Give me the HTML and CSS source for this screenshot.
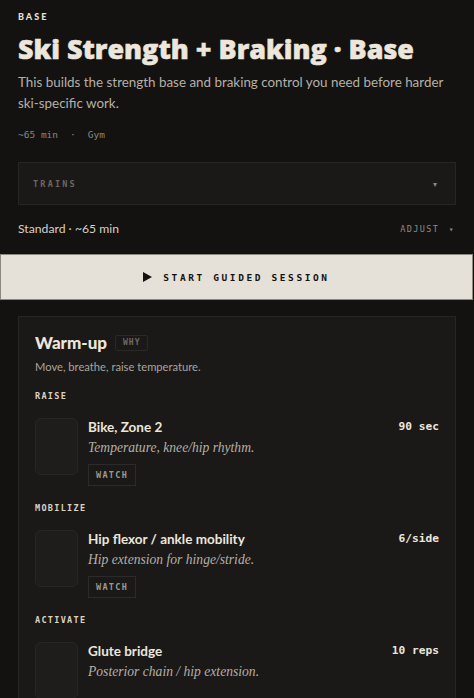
FILE: index.html
```html
<!DOCTYPE html>
<html lang="en">
<head>
<meta charset="utf-8">
<title>Ski Strength + Braking · Base</title>
<link rel="stylesheet" href="styles.css">
</head>
<body>
<main class="page">
  <div class="eyebrow">BASE</div>
  <h1 class="title">Ski Strength + Braking · Base</h1>
  <p class="lede">This builds the strength base and braking control you need before harder ski-specific work.</p>
  <div class="meta"><span>~65 min</span><span>·</span><span>Gym</span></div>

  <div class="select">
    <span class="select-label">TRAINS</span>
    <span class="caret">▾</span>
  </div>

  <div class="option-row">
    <span class="option-text">Standard · ~65 min</span>
    <span class="adjust">ADJUST <span class="caret small">▾</span></span>
  </div>

  <button class="start" type="button"><svg class="play" width="9" height="10" viewBox="0 0 9 10" aria-hidden="true"><path d="M0 0 L9 5 L0 10 Z" fill="#141312"/></svg><span>START GUIDED SESSION</span></button>

  <section class="card">
    <div class="card-head">
      <h2 class="card-title">Warm-up</h2>
      <span class="why">WHY</span>
    </div>
    <p class="card-sub">Move, breathe, raise temperature.</p>

    <div class="group-label">RAISE</div>
    <div class="exercise">
      <div class="thumb"></div>
      <div class="ex-body">
        <div class="ex-top"><span class="ex-name">Bike, Zone 2</span><span class="ex-dose">90 sec</span></div>
        <div class="ex-desc">Temperature, knee/hip rhythm.</div>
        <span class="watch">WATCH</span>
      </div>
    </div>

    <div class="group-label">MOBILIZE</div>
    <div class="exercise">
      <div class="thumb"></div>
      <div class="ex-body">
        <div class="ex-top"><span class="ex-name">Hip flexor / ankle mobility</span><span class="ex-dose">6/side</span></div>
        <div class="ex-desc">Hip extension for hinge/stride.</div>
        <span class="watch">WATCH</span>
      </div>
    </div>

    <div class="group-label">ACTIVATE</div>
    <div class="exercise">
      <div class="thumb"></div>
      <div class="ex-body">
        <div class="ex-top"><span class="ex-name">Glute bridge</span><span class="ex-dose">10 reps</span></div>
        <div class="ex-desc">Posterior chain / hip extension.</div>
      </div>
    </div>
  </section>
</main>
</body>
</html>
```
FILE: styles.css
```css
html, body {
  margin: 0;
  padding: 0;
  background: #131211;
}
body {
  font-family: Lato, "Open Sans", sans-serif;
  color: #ece6dc;
}
.page {
  padding: 11px 18px 40px;
}
.eyebrow {
  font-family: Lato, sans-serif;
  font-weight: 900;
  font-size: 9px;
  line-height: 12px;
  letter-spacing: 2px;
  color: #e6e0d6;
}
.title {
  margin: 9px 0 0;
  font-family: "Open Sans", sans-serif;
  font-weight: 800;
  font-size: 26.9px;
  line-height: 34px;
  -webkit-text-stroke: 0.5px #ece6dc;
  color: #ece6dc;
}
.lede {
  margin: 6px 0 0;
  font-size: 13.4px;
  line-height: 21px;
  color: #b5b0a6;
}
.meta {
  margin-top: 14px;
  display: flex;
  gap: 12px;
  font-family: "DejaVu Sans Mono", monospace;
  font-size: 9.5px;
  line-height: 14px;
  color: #8a867f;
}
.select {
  margin-top: 20px;
  height: 43px;
  box-sizing: border-box;
  border: 1px solid #262523;
  background: #1a1918;
  display: flex;
  align-items: center;
  justify-content: space-between;
  padding: 0 18px 0 14px;
}
.select-label {
  font-family: "DejaVu Sans Mono", monospace;
  font-weight: 700;
  font-size: 8.5px;
  letter-spacing: 2.2px;
  color: #6b6761;
}
.caret {
  font-size: 8px;
  line-height: 10px;
  color: #8a867f;
}
.option-row {
  margin-top: 15px;
  height: 18px;
  display: flex;
  align-items: center;
  justify-content: space-between;
  line-height: 18px;
}
.option-text {
  font-size: 12.2px;
  color: #d6d1c8;
}
.adjust {
  font-family: "DejaVu Sans Mono", monospace;
  font-size: 8.5px;
  letter-spacing: 1.4px;
  color: #8f8a83;
  padding-right: 1px;
}
.caret.small {
  margin-left: 3px;
}
.start {
  display: flex;
  align-items: center;
  justify-content: center;
  gap: 11px;
  width: calc(100% + 35px);
  margin: 16px -18px 0;
  height: 46px;
  box-sizing: border-box;
  background: #e6e1d8;
  border: 1px solid #8c8880;
  font-family: "DejaVu Sans Mono", monospace;
  font-weight: 700;
  font-size: 9.5px;
  letter-spacing: 2.6px;
  color: #141312;
  padding: 0;
}
.play {
  display: block;
}
.card {
  margin-top: 16px;
  border: 1px solid #262523;
  background: #1a1918;
  padding: 15px 16px 20px;
}
.card-head {
  display: flex;
  align-items: center;
  gap: 8px;
}
.card-title {
  margin: 0;
  font-size: 17px;
  line-height: 22px;
  font-weight: 900;
  color: #ece6dc;
}
.why {
  height: 16px;
  box-sizing: border-box;
  padding: 0 7px;
  border: 1px solid #2a2927;
  border-radius: 2px;
  font-family: "DejaVu Sans Mono", monospace;
  font-weight: 700;
  font-size: 8px;
  line-height: 14px;
  letter-spacing: 1px;
  color: #6f6b65;
}
.card-sub {
  margin: 5px 0 0;
  font-size: 11.2px;
  line-height: 16px;
  color: #a9a49b;
}
.group-label {
  margin-top: 15px;
  font-family: "DejaVu Sans Mono", monospace;
  font-weight: 700;
  font-size: 8.5px;
  line-height: 12px;
  letter-spacing: 1.3px;
  color: #dcd3c0;
}
.exercise + .group-label {
  margin-top: 16px;
}
.exercise {
  margin-top: 16px;
  display: flex;
  gap: 10px;
}
.thumb {
  flex: none;
  width: 43px;
  height: 57px;
  box-sizing: border-box;
  border: 1px solid #272624;
  border-radius: 6px;
  background: #1e1d1c;
}
.ex-body {
  flex: 1;
  display: flex;
  flex-direction: column;
  align-items: flex-start;
}
.ex-top {
  align-self: stretch;
  display: flex;
  justify-content: space-between;
  align-items: center;
  line-height: 18px;
}
.ex-name {
  font-size: 13.5px;
  font-weight: 700;
  color: #ece6dc;
}
.ex-dose {
  font-family: "DejaVu Sans Mono", monospace;
  font-weight: 700;
  font-size: 11.2px;
  color: #ece6dc;
}
.ex-desc {
  margin-top: 2px;
  font-family: "Liberation Serif", serif;
  font-style: italic;
  font-size: 13.6px;
  line-height: 20px;
  color: #b5b0a6;
}
.watch {
  margin-top: 6px;
  height: 22px;
  box-sizing: border-box;
  padding: 0 7px;
  border: 1px solid #2c2b29;
  font-family: "DejaVu Sans Mono", monospace;
  font-weight: 700;
  font-size: 8.5px;
  line-height: 20px;
  letter-spacing: 1.3px;
  color: #9d988f;
}
```
